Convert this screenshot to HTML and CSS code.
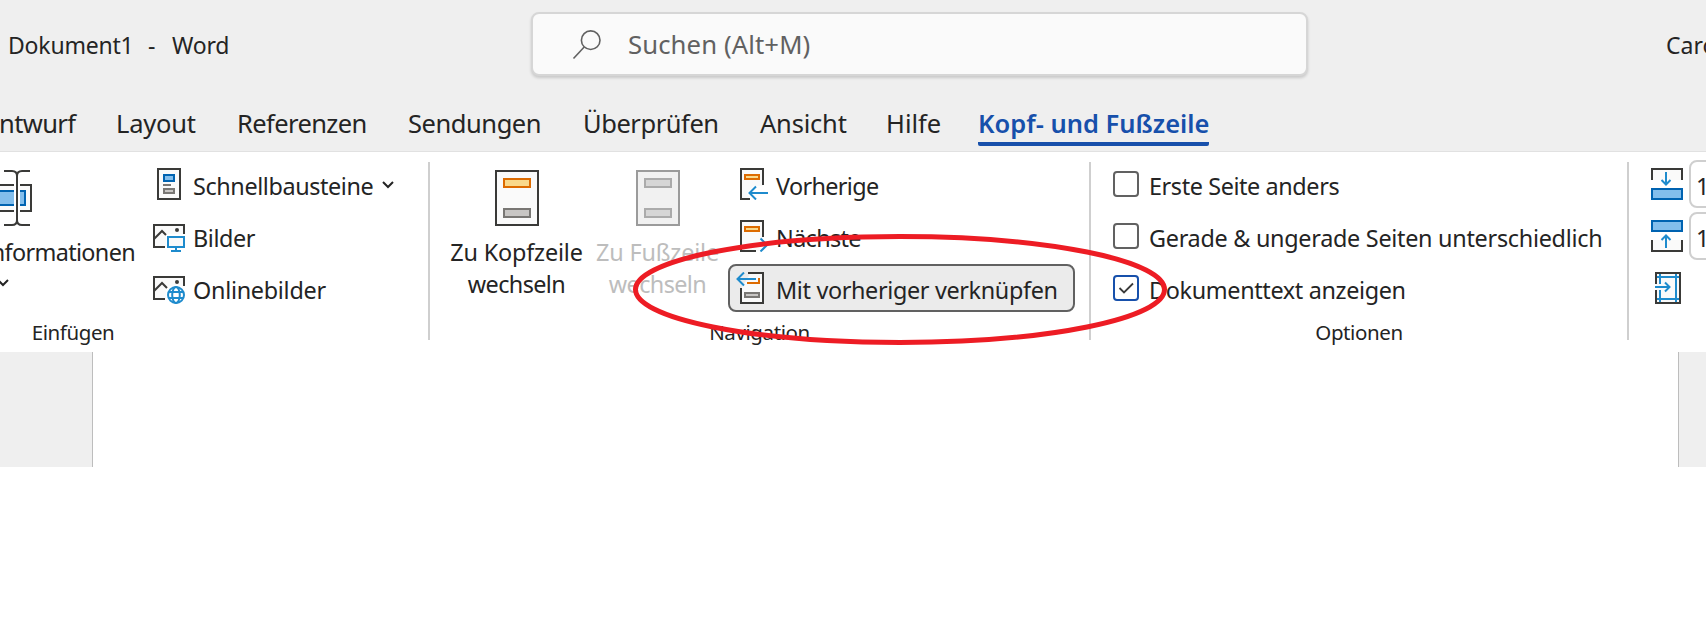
FILE: index.html
```html
<!DOCTYPE html>
<html lang="de">
<head>
<meta charset="utf-8">
<title>Dokument1 - Word</title>
<link rel="stylesheet" href="styles.css">
</head>
<body>
<header class="top">
  <div class="titlebar">
    <div class="doc"><span class="doc-name">Dokument1</span><span class="doc-dash">-</span><span class="doc-app">Word</span></div>
    <div class="search">
      <svg class="search-icon" width="30" height="32" viewBox="0 0 30 32" fill="none" stroke="#616161" stroke-width="1.6"><circle cx="18.7" cy="11.2" r="9.3"/><path d="M12.2 18 1.5 29.5"/></svg>
      <span class="search-text">Suchen (Alt+M)</span>
    </div>
    <div class="user">Caro</div>
  </div>
  <nav class="tabs">
    <span class="t0">ntwurf</span><span class="t1">Layout</span><span class="t2">Referenzen</span><span class="t3">Sendungen</span><span class="t4">Überprüfen</span><span class="t5">Ansicht</span><span class="t6">Hilfe</span><span class="t7 active">Kopf- und Fußzeile</span>
  </nav>
</header>
<main class="ribbon">
  <section class="group insert">
    <div class="controls">
      <div class="big info">
        <svg width="34" height="56" viewBox="0 0 34 56" fill="none"><path d="M-2 15H31V41H-2" fill="#fafafa" stroke="#3a3a38" stroke-width="2"/><path d="M-2 21H25V35H-2" fill="#83beec" stroke="#0063b1" stroke-width="2"/><path d="M14 10h6v36h-6z" fill="#fff"/><path d="M4 1h8q5 0 5 5 0-5 5-5h8M4 55h8q5 0 5-5 0 5 5 5h8M17 4v48" stroke="#3a3a38" stroke-width="2"/></svg>
        <span class="info-label">nformationen</span>
        <svg class="info-chev" width="12" height="8" viewBox="0 0 12 8" fill="none" stroke="#242424" stroke-width="2"><path d="m1 1 5 5 5-5"/></svg>
      </div>
      <div class="rows">
        <div class="row">
          <svg width="32" height="32" viewBox="0 0 32 32" fill="none" stroke-width="2"><path d="M5 1h22v30H5z" fill="#fafafa" stroke="#3a3a38"/><path d="M11 7h10v6H11z" fill="#83beec" stroke="#0063b1"/><path d="M10 17h8" stroke="#797774"/><path d="M11 21h10v4H11z" fill="#c8c6c4" stroke="#797774"/></svg>
          <span class="r-schnell">Schnellbausteine</span>
          <svg class="chev" width="12" height="8" viewBox="0 0 12 8" fill="none" stroke="#242424" stroke-width="2"><path d="m1 1 5 5 5-5"/></svg>
        </div>
        <div class="row">
          <svg width="32" height="32" viewBox="0 0 32 32" fill="none" stroke-width="2"><path d="M1 5h30v9H13v13H1z" fill="#fafafa"/><path d="M31 14V5H1v22h11M1 19l8-8 4 4" stroke="#3a3a38"/><circle cx="24" cy="10" r="2" fill="#3a3a38"/><path d="M15 17h16v10H15z" fill="#fafafa" stroke="#1e8bcd"/><path d="M23 27v4M18 31h10" stroke="#1e8bcd"/></svg>
          <span class="r-bilder">Bilder</span>
        </div>
        <div class="row">
          <svg width="32" height="32" viewBox="0 0 32 32" fill="none" stroke-width="2"><path d="M1 5h30v9H13v13H1z" fill="#fafafa"/><path d="M31 14V5H1v22h11M1 19l8-8 5 5" stroke="#3a3a38"/><circle cx="24" cy="10" r="2" fill="#3a3a38"/><circle cx="23" cy="23" r="10" fill="#fff"/><g stroke="#1e8bcd" stroke-width="2"><circle cx="23" cy="23" r="8"/><ellipse cx="23" cy="23" rx="3.8" ry="8"/><path d="M16 20h14M16 26h14"/></g></svg>
          <span class="r-online">Onlinebilder</span>
        </div>
      </div>
    </div>
    <div class="caption"><span class="c-insert">Einfügen</span></div>
  </section>
  <i class="sep"></i>
  <section class="group navi">
    <div class="controls">
      <div class="big head">
        <svg width="44" height="56" viewBox="0 0 44 56" stroke-width="2"><path d="M1 1h42v54H1z" fill="#fafafa" stroke="#3a3a38"/><path d="M9 9h26v8H9z" fill="#f9d98b" stroke="#dd6b00"/><path d="M9 39h26v8H9z" fill="#c8c6c4" stroke="#797774"/></svg>
        <span class="b1">Zu Kopfzeile</span><span class="b2">wechseln</span>
      </div>
      <div class="big foot">
        <svg width="44" height="56" viewBox="0 0 44 56" stroke-width="2"><path d="M1 1h42v54H1z" fill="#f1f1f1" stroke="#9b9b9b"/><path d="M9 9h26v8H9zM9 39h26v8H9z" fill="#d6d6d6" stroke="#ababab"/></svg>
        <span class="b3">Zu Fußzeile</span><span class="b2">wechseln</span>
      </div>
      <div class="rows">
        <div class="row">
          <svg width="32" height="32" viewBox="0 0 32 32" fill="none" stroke-width="2"><path d="M5 1h22v17H17l-6 7 3 6H5z" fill="#fafafa"/><path d="M27 17V1H5v30h9" stroke="#3a3a38"/><path d="M9 7h14v4H9z" fill="#f9d98b" stroke="#dd6b00"/><path d="M32 25H14M20 18.5 13.5 25l6.500 6.500" stroke="#1e8bcd"/></svg>
          <span class="r-vor">Vorherige</span>
        </div>
        <div class="row">
          <svg width="32" height="32" viewBox="0 0 32 32" fill="none" stroke-width="2"><path d="M5 1h22v17l-4 13H5z" fill="#fafafa"/><path d="M27 17V1H5v30h15" stroke="#3a3a38"/><path d="M9 7h14v4H9z" fill="#f9d98b" stroke="#dd6b00"/><path d="M12 25h18M24.500 18.500 31 25l-6.500 6.500" stroke="#1e8bcd"/></svg>
          <span class="r-next">Nächste</span>
        </div>
        <div class="row pressed">
          <svg width="32" height="32" viewBox="0 0 32 32" fill="none" stroke-width="2"><path d="M14 2h13v29H5V17z" fill="#fafafa"/><path d="M12 1h15v30H5V16" stroke="#3a3a38"/><path d="M23 6v5H11" stroke="#dd6b00"/><path d="M20 7H1.500M8 .5 1.500 7 8 13.500" stroke="#1e8bcd"/><path d="M9 21h14v4H9z" fill="#c8c6c4" stroke="#797774"/></svg>
          <span class="r-link">Mit vorheriger verknüpfen</span>
        </div>
      </div>
    </div>
    <div class="caption"><span class="c-nav">Navigation</span></div>
  </section>
  <i class="sep"></i>
  <section class="group options">
    <div class="rows">
      <div class="row"><b class="box"></b><span class="r-erste">Erste Seite anders</span></div>
      <div class="row"><b class="box"></b><span class="r-gerade">Gerade &amp; ungerade Seiten unterschiedlich</span></div>
      <div class="row"><b class="box checked"><svg width="22" height="22" viewBox="0 0 22 22" fill="none" stroke="#3a3a3a" stroke-width="1.800"><path d="m4.500 11 4.500 4.500 9-9"/></svg></b><span class="r-dok">Dokumenttext anzeigen</span></div>
    </div>
    <div class="caption"><span class="c-opt">Optionen</span></div>
  </section>
  <i class="sep"></i>
  <section class="group position">
    <div class="row">
      <svg width="32" height="32" viewBox="0 0 32 32" fill="none" stroke-width="2"><path d="M1 12V1h30v11" fill="#fafafa" stroke="#3a3a38"/><path d="M15 4v13M10.500 12l4.500 4.500 4.500-4.500" stroke="#1e8bcd"/><path d="M1 21h30v10H1z" fill="#83beec" stroke="#0063b1"/></svg>
      <span class="field">1</span>
    </div>
    <div class="row">
      <svg width="32" height="32" viewBox="0 0 32 32" fill="none" stroke-width="2"><path d="M1 20v11h30V20" fill="#fafafa" stroke="#3a3a38"/><path d="M15 28V15M10.500 20l4.500-4.500 4.500 4.500" stroke="#1e8bcd"/><path d="M1 1h30v10H1z" fill="#83beec" stroke="#0063b1"/></svg>
      <span class="field">1</span>
    </div>
    <div class="row">
      <svg width="32" height="32" viewBox="0 0 32 32" fill="none" stroke-width="2"><path d="M5 12V1h24v30H5V18" fill="#fafafa" stroke="#3a3a38"/><path d="M6 5h22M6 27h22M25 2v28M9 2v10M9 18v12M4 15h14M14 10.500l4.500 4.500-4.500 4.500" stroke="#1e8bcd"/></svg>
    </div>
  </section>
  <svg class="mark" width="536" height="113" viewBox="0 0 536 113" fill="none" stroke="#ed1c24" stroke-width="5"><ellipse cx="268" cy="56.500" rx="264.500" ry="53"/></svg>
</main>
<div class="workspace"><div class="page"></div></div>
</body>
</html>
```
FILE: styles.css
```css
* { box-sizing: border-box; }
body { margin: 0; width: 1706px; height: 621px; overflow: hidden; background: #fff; color: #242424; font-family: "Noto Sans", "Open Sans", sans-serif; font-size: 23.4px; line-height: 32px; }
svg { display: block; flex: none; overflow: hidden; }
span { white-space: nowrap; }
.top { height: 152px; background: #efefef; border-bottom: 1px solid #e1e1e1; }
.titlebar { display: flex; height: 96px; padding-top: 12px; }
.doc { width: 531px; display: flex; padding: 17px 0 0 8px; font-size: 23px; letter-spacing: -.2px; }
.doc-name { width: 140px; }
.doc-dash { width: 24px; }
.search { display: flex; width: 777px; height: 64px; border: 2px solid #d6d6d6; border-radius: 8px; background: #fafafa; box-shadow: 0 2px 3px rgba(0,0,0,.16); padding: 15px 0 0 39px; }
.search-text { margin-left: 26px; color: #616161; font-size: 25.700px; line-height: 32px; letter-spacing: .1px; }
.user { width: 40px; margin-left: 358px; padding-top: 17px; font-size: 23px; overflow: hidden; }
.tabs { display: grid; grid-template-columns: 116px 121px 171px 175px 177px 126px 92px 231px; height: 55px; padding-top: 9px; font-size: 25.500px; line-height: 36px; letter-spacing: -.45px; }
.tabs span { justify-self: start; }
.tabs .t0 { margin-left: -1px; letter-spacing: -.6px; }
.tabs .t1, .tabs .t5 { letter-spacing: -.2px; }
.tabs .t2 { letter-spacing: -.6px; }
.tabs .t6 { letter-spacing: 0; }
.tabs .active { justify-self: stretch; height: 41px; border-bottom: 4px solid #1750ab; border-radius: 2px; color: #1750ab; font-weight: 600; letter-spacing: 0; }
.ribbon { position: relative; display: flex; height: 200px; }
.sep { width: 2px; height: 178px; margin-top: 10px; background: #cfcfcf; flex: none; }
.group { flex: none; padding-top: 8px; overflow: hidden; }
.controls { display: flex; height: 156px; }
.rows { height: 156px; }
.row { display: flex; height: 52px; padding-top: 8px; }
.row > span { margin: 2px 0 0 8px; line-height: 32px; letter-spacing: -.4px; }
.row .r-online, .row .r-gerade { letter-spacing: -.28px; }
.row .r-link, .row .r-dok { letter-spacing: -.35px; }
.row .r-vor, .row .r-next { letter-spacing: -.65px; }
.insert { width: 428px; }
.navi { width: 659px; }
.options { width: 536px; }
.position { width: 77px; padding-left: 22px; }
.big { display: flex; flex-direction: column; align-items: center; padding-top: 10px; }
.big svg + span { margin-top: 10px; }
.b1, .b3 { letter-spacing: -.15px; }
.b2 { letter-spacing: -.6px; }
.info { width: 153px; align-items: flex-start; }
.info-label { align-self: flex-end; margin-right: 18px; letter-spacing: -.65px; }
.info .info-chev { margin: 11px 0 0 -3px; }
.head { width: 141px; margin-left: 16px; }
.foot { width: 141px; color: #bdbdbd; margin-right: 8px; }
.navi .rows { width: 347px; margin-left: -8px; }
.navi .row { padding-left: 8px; }
.navi .pressed { height: 48px; padding: 6px 0 0 6px; border: 2px solid #616161; border-radius: 8px; background: #ebebeb; }
.chev { margin: 13px 0 0 9px; }
.caption { display: flex; justify-content: center; font-size: 20.500px; line-height: 32px; letter-spacing: -.4px; }
.insert .caption { width: 146px; }
.options .rows { padding-left: 22px; }
.box { display: block; width: 26px; height: 26px; border: 2px solid #616161; border-radius: 4px; margin-top: 3px; }
.box.checked { border-color: #1750ab; }
.options .row > span { margin-left: 10px; }
.position .row > .field { flex: none; width: 60px; height: 48px; margin: -8px 0 0 6px; border: 2px solid #cfcfcf; border-radius: 8px; padding: 8px 0 0 5px; }
.mark { position: absolute; left: 632px; top: 81px; }
.workspace { height: 115px; background: #efefef; padding: 0 27px 0 92px; }
.page { height: 115px; background: #fff; border: solid #bdbdbd; border-width: 0 1px; }
```
